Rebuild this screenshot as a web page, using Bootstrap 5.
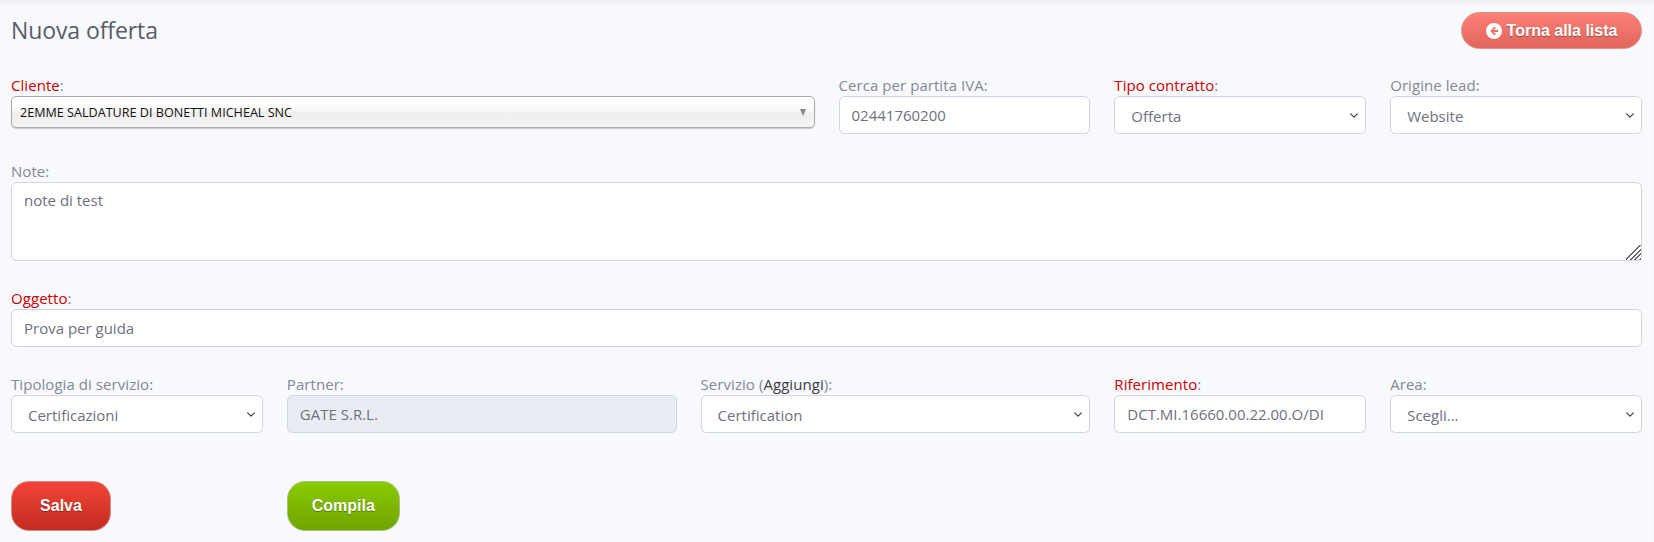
<!DOCTYPE html>
<html lang="it">
<head>
<meta charset="utf-8">
<title>Nuova offerta</title>
<link rel="stylesheet" href="https://cdn.jsdelivr.net/npm/bootstrap@5.3.0/dist/css/bootstrap.min.css">
<style>
html, body { overflow: hidden; }
body { background: #f8f9fc; font-family: "Open Sans", "Noto Sans", sans-serif; font-size: 15px; color: #858796; box-shadow: inset 0 5px 6px -4px rgba(90,92,105,.10); min-height: 542px; }
.page-wrap { padding: 12px 12px 0 11px; }
.page-head { margin-bottom: 25px; min-height: 37px; }
.page-title { font-size: 23px; font-weight: 400; color: #5a5c69; margin: 0; line-height: 37px; letter-spacing: -.1px; }
.fld-row { margin-bottom: 26px; }
.fld-label { display: block; height: 22px; line-height: 22px; margin: 0; font-size: 15px; color: #858796; letter-spacing: .06px; white-space: nowrap; }
.req { color: #cc0000; }
.fld-label b { font-weight: 400; color: #3a3b45; }
.form-control.fld, .form-select.fld { height: 38px; font-size: 15px; color: #6e707e; border: 1px solid #d1d3e2; border-radius: 5.5px; padding: 6px 12px; box-shadow: none; }
.form-select.fld { padding: 7px 20px 5px 16px; background-size: 10px 9px; background-position: right 6px center; }
.form-control.fld:disabled { background: #eaecf4; opacity: 1; color: #6e707e; }
textarea.form-control.fld { height: 79px; }
textarea.fld::-webkit-resizer { background: linear-gradient(135deg, #fff 45%, transparent 45%), repeating-linear-gradient(135deg, #666 0 1.6px, #fff 1.6px 3.2px); }
.chosen-box { height: 32px; padding: 0 8px; border: 1px solid #aaa; border-radius: 5px; color: #111; font-size: 12.6px; line-height: 29px; background: linear-gradient(#fff 20%, #f6f6f6 50%, #eee 52%, #f4f4f4 100%); box-shadow: 0 1px 1px rgba(0,0,0,.2); }
.chosen-caret { width: 0; height: 0; border-left: 3.5px solid transparent; border-right: 3.5px solid transparent; border-top: 7px solid #888; }
.fancy-btn { font-family: "Liberation Sans", Arial, sans-serif; font-weight: 700; font-size: 16px; color: #fff; text-shadow: 0 1px 1px rgba(0,0,0,.35); border-radius: 18px; height: 50px; padding: 0; }
.fancy-btn:hover { color: #fff; }
.btn-back { height: 37px; width: 181px; border-radius: 19px; border: 1px solid #e0908b; background: linear-gradient(#fb8078, #e0665d); display: inline-flex; align-items: center; justify-content: center; gap: 5px; }
.btn-save { width: 100px; border: 1px solid #d28a86; background: linear-gradient(#f4433a, #c22c1f); }
.btn-fill { width: 113px; border: 1px solid #a6c27a; background: linear-gradient(#8aca00, #70a500); }
.actions-row { margin-top: 48px; }
.back-ico { width: 16px; height: 16px; flex: none; }
</style>
</head>
<body>
<div class="page-wrap">
  <div class="page-head d-flex justify-content-between align-items-start">
    <h1 class="page-title">Nuova offerta</h1>
    <button type="button" class="btn fancy-btn btn-back">
      <svg class="back-ico" viewBox="0 0 16 16" aria-hidden="true"><circle cx="8" cy="8" r="8" fill="#fff"/><path d="M8.6 3.6 4.2 8l4.400 4.400 1.300-1.300-2.200-2.200h4.600V7.100H7.700l2.200-2.200z" fill="#e9726a"/></svg>
      Torna alla lista
    </button>
  </div>

  <div class="row fld-row">
    <div class="col-6">
      <label class="fld-label"><span class="req">Cliente</span>:</label>
      <div class="chosen-box d-flex justify-content-between align-items-center">
        <span>2EMME SALDATURE DI BONETTI MICHEAL SNC</span>
        <span class="chosen-caret"></span>
      </div>
    </div>
    <div class="col-2">
      <label class="fld-label">Cerca per partita IVA:</label>
      <input class="form-control fld" value="02441760200">
    </div>
    <div class="col-2">
      <label class="fld-label"><span class="req">Tipo contratto</span>:</label>
      <select class="form-select fld"><option>Offerta</option></select>
    </div>
    <div class="col-2">
      <label class="fld-label">Origine lead:</label>
      <select class="form-select fld"><option>Website</option></select>
    </div>
  </div>

  <div class="row fld-row">
    <div class="col-12">
      <label class="fld-label">Note:</label>
      <textarea class="form-control fld">note di test</textarea>
    </div>
  </div>

  <div class="row fld-row">
    <div class="col-12">
      <label class="fld-label"><span class="req">Oggetto</span>:</label>
      <input class="form-control fld" value="Prova per guida">
    </div>
  </div>

  <div class="row">
    <div class="col-2">
      <label class="fld-label">Tipologia di servizio:</label>
      <select class="form-select fld"><option>Certificazioni</option></select>
    </div>
    <div class="col-3">
      <label class="fld-label">Partner:</label>
      <input class="form-control fld" value="GATE S.R.L." disabled>
    </div>
    <div class="col-3">
      <label class="fld-label">Servizio (<b>Aggiungi</b>):</label>
      <select class="form-select fld"><option>Certification</option></select>
    </div>
    <div class="col-2">
      <label class="fld-label"><span class="req">Riferimento</span>:</label>
      <input class="form-control fld" value="DCT.MI.16660.00.22.00.O/DI">
    </div>
    <div class="col-2">
      <label class="fld-label">Area:</label>
      <select class="form-select fld"><option>Scegli...</option></select>
    </div>
  </div>

  <div class="row actions-row">
    <div class="col-2"><button type="button" class="btn fancy-btn btn-save">Salva</button></div>
    <div class="col-3"><button type="button" class="btn fancy-btn btn-fill">Compila</button></div>
  </div>
</div>
</body>
</html>
